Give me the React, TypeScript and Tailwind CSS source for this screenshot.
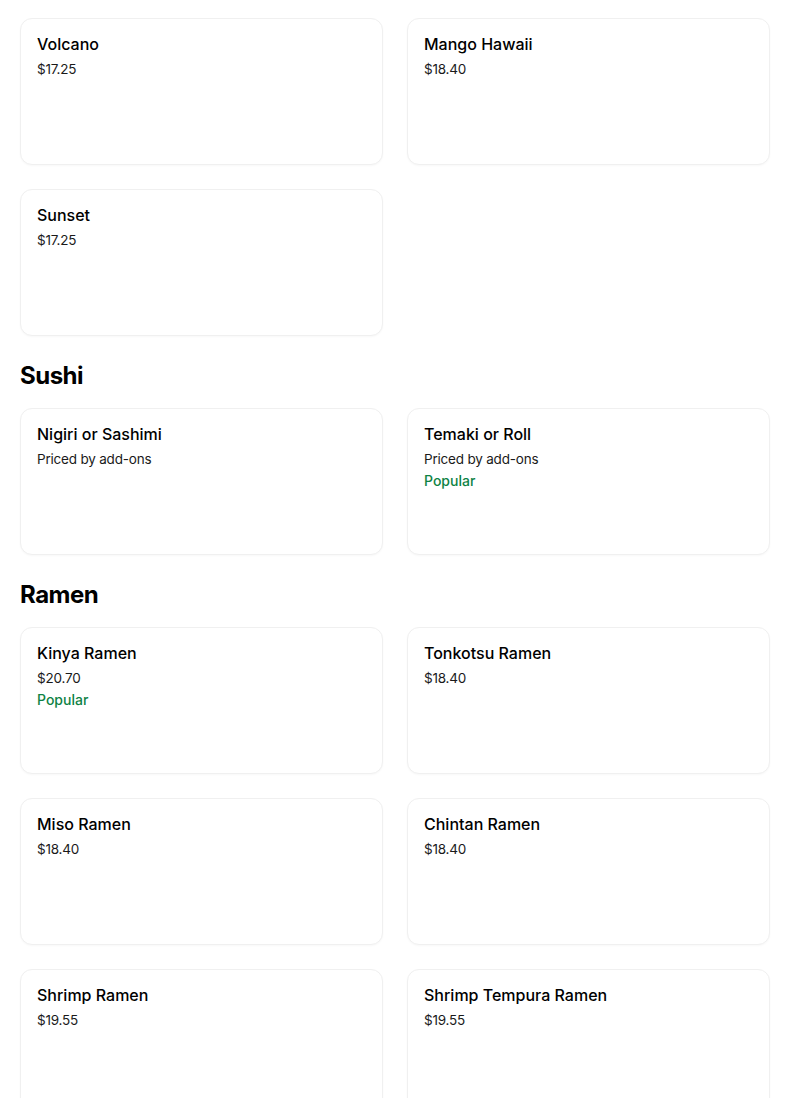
const font = { fontFamily: "Inter, 'Noto Sans', sans-serif" };

interface Item {
  name: string;
  price: string;
  popular?: boolean;
}

const SECTIONS: Array<{ title?: string; items: Item[] }> = [
  {
    items: [
      { name: "Volcano", price: "$17.25" },
      { name: "Mango Hawaii", price: "$18.40" },
      { name: "Sunset", price: "$17.25" },
    ],
  },
  {
    title: "Sushi",
    items: [
      { name: "Nigiri or Sashimi", price: "Priced by add-ons" },
      { name: "Temaki or Roll", price: "Priced by add-ons", popular: true },
    ],
  },
  {
    title: "Ramen",
    items: [
      { name: "Kinya Ramen", price: "$20.70", popular: true },
      { name: "Tonkotsu Ramen", price: "$18.40" },
      { name: "Miso Ramen", price: "$18.40" },
      { name: "Chintan Ramen", price: "$18.40" },
      { name: "Shrimp Ramen", price: "$19.55" },
      { name: "Shrimp Tempura Ramen", price: "$19.55" },
    ],
  },
];

function ItemCard({ item }: { item: Item }) {
  return (
    <div className="h-[147px] rounded-xl border border-[#f0f0f0] bg-white px-4 pt-[14px] shadow-[0_1px_2px_rgba(0,0,0,0.03)]">
      <div className="text-[16px] leading-[22px] font-medium text-black">{item.name}</div>
      <div className="mt-[4px] text-[13.5px] leading-[20px] text-[#1a1a1a] tracking-[-0.2px]">{item.price}</div>
      {item.popular && (
        <div className="mt-[2px] text-[14px] leading-[20px] font-medium text-[#0e8345]">Popular</div>
      )}
    </div>
  );
}

export default function App() {
  return (
    <div className="min-h-screen bg-white px-5 pt-[18px]" style={font}>
      <div className="w-[750px]">
        {SECTIONS.map((section, i) => (
          <div key={i} className={section.title ? "mt-6" : ""}>
            {section.title && (
              <h2 className="mb-4 text-[24px] leading-[32px] font-bold tracking-[-0.5px] text-black">
                {section.title}
              </h2>
            )}
            <div className="grid grid-cols-2 gap-x-6 gap-y-6">
              {section.items.map(item => (
                <ItemCard key={item.name} item={item} />
              ))}
            </div>
          </div>
        ))}
      </div>
    </div>
  );
}
